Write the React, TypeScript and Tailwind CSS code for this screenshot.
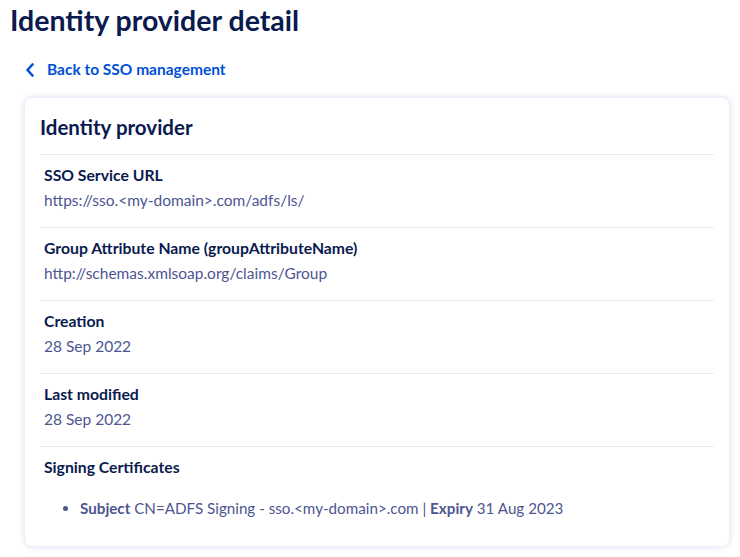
import React from "react";

const rows = [
  { label: "SSO Service URL", value: "https://sso.<my-domain>.com/adfs/ls/" },
  { label: "Group Attribute Name (groupAttributeName)", value: "http://schemas.xmlsoap.org/claims/Group" },
  { label: "Creation", value: "28 Sep 2022" },
  { label: "Last modified", value: "28 Sep 2022" },
];

export default function App() {
  return (
    <div className="w-[740px] h-[557px] bg-white overflow-hidden" style={{ fontFamily: "Lato, 'Open Sans', sans-serif" }}>
      <h1 className="pl-[10px] pt-[2px] text-[28.5px] leading-[36px] font-bold text-[#0a1a4f]">Identity provider detail</h1>
      <div className="pl-[25px] mt-[20px] flex items-center h-[24px]">
        <svg width="10" height="14" viewBox="0 0 10 14" className="mr-[12px]">
          <path d="M7.5 1.5 L2.5 7 L7.5 12.5" fill="none" stroke="#0050d7" strokeWidth="2.6" strokeLinecap="round" strokeLinejoin="round" />
        </svg>
        <span className="text-[15.5px] font-bold text-[#0050d7]">Back to SSO management</span>
      </div>
      <div className="ml-[24px] mt-[15px] w-[706px] h-[450px] rounded-[8px] bg-white border border-[#eceefa] shadow-[0_0_6px_rgba(0,14,156,0.12)] px-[15px] pt-[14px]">
        <h2 className="text-[20.5px] leading-[30px] font-bold text-[#0a1a4f] pb-[12px] border-b border-[#e9ebf0]">Identity provider</h2>
        {rows.map((r) => (
          <div key={r.label} className="px-[4px] pt-[9px] pb-[15px] border-b border-[#e9ebf0]">
            <div className="text-[15.75px] leading-[22px] font-bold text-[#0a1a4f]">{r.label}</div>
            <div className="text-[15.5px] leading-[24px] mt-[2px] text-[#4d5592]">{r.value}</div>
          </div>
        ))}
        <div className="px-[4px] pt-[9px]">
          <div className="text-[15.75px] leading-[22px] font-bold text-[#0a1a4f]">Signing Certificates</div>
          <ul className="mt-[18px] pl-[36px] list-disc text-[15.2px] leading-[24px] text-[#4d5592] marker:text-[#4d5592]">
            <li>
              <span className="font-bold">Subject</span> CN=ADFS Signing - sso.&lt;my-domain&gt;.com | <span className="font-bold">Expiry</span> 31 Aug 2023
            </li>
          </ul>
        </div>
      </div>
    </div>
  );
}
